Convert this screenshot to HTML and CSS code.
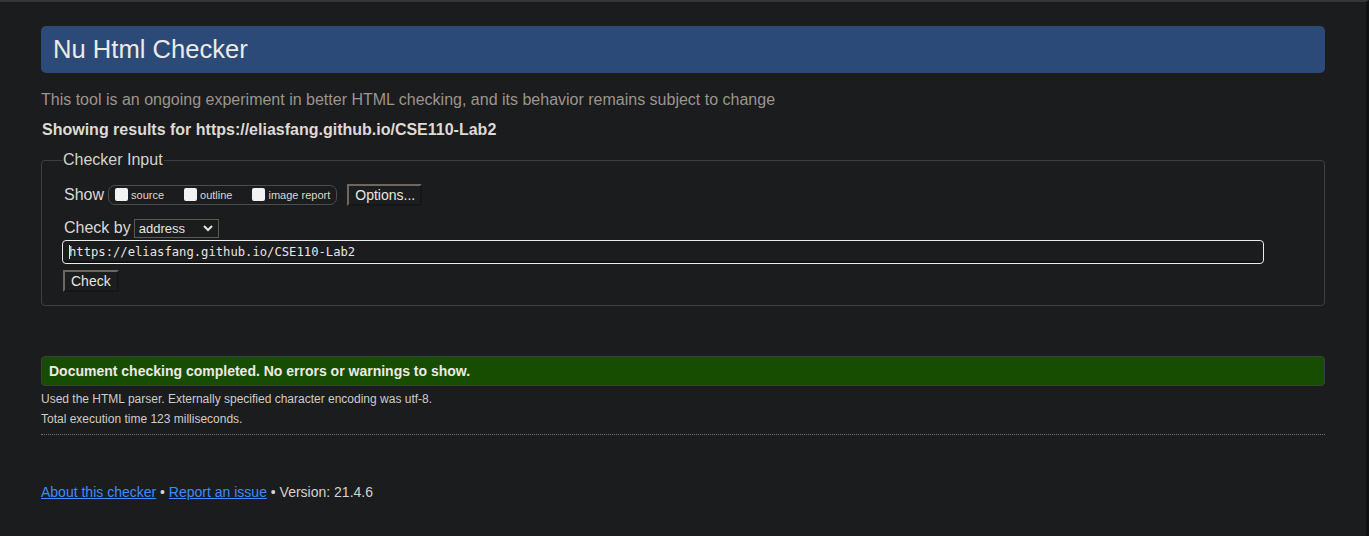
FILE: index.html
```html
<!DOCTYPE html>
<html lang="en">
<head>
<meta charset="utf-8">
<title>Nu Html Checker</title>
<link rel="stylesheet" href="styles.css">
</head>
<body>
<div class="page">
  <h1 class="title">Nu Html Checker</h1>
  <p class="intro">This tool is an ongoing experiment in better HTML checking, and its behavior remains subject to change</p>
  <p class="showing">Showing results for https://eliasfang.github.io/CSE110-Lab2</p>
  <fieldset class="input-box">
    <legend>Checker Input</legend>
    <div class="row show-row">
      <span class="lbl">Show</span>
      <span class="opts">
        <label><span class="cb"></span>source</label>
        <label><span class="cb"></span>outline</label>
        <label><span class="cb"></span>image report</label>
      </span>
      <span class="btn options">Options...</span>
    </div>
    <div class="row by-row">
      <span class="lbl">Check by</span>
      <span class="select">address
        <svg width="12" height="8" viewBox="0 0 12 8"><path d="M2 2l4 4 4-4" fill="none" stroke="#e8e6e3" stroke-width="2"/></svg>
      </span>
    </div>
    <div class="url"><span class="caret"></span>https://eliasfang.github.io/CSE110-Lab2</div>
    <div class="row"><span class="btn check">Check</span></div>
  </fieldset>
  <div class="success">Document checking completed. No errors or warnings to show.</div>
  <p class="detail">Used the HTML parser. Externally specified character encoding was utf-8.</p>
  <p class="detail">Total execution time 123 milliseconds.</p>
  <hr class="dots">
  <p class="footer"><a href="#">About this checker</a> • <a href="#">Report an issue</a> • Version: 21.4.6</p>
</div>
</body>
</html>
```
FILE: styles.css
```css
html, body {
  margin: 0;
  padding: 0;
  background: #1b1c1e;
}
body {
  font-family: "Liberation Sans", Arial, sans-serif;
  color: #dcd8d2;
  height: 536px;
  box-sizing: border-box;
  border-top: 2px solid #34363a;
  border-right: 3px solid #0f1011;
  overflow: hidden;
}
.page {
  padding: 24px 41px 0 41px;
}
.title {
  margin: 0;
  height: 47px;
  box-sizing: border-box;
  background: #2b4a78;
  border-radius: 5px;
  font-weight: normal;
  font-size: 25.6px;
  line-height: 47px;
  padding-left: 12px;
  color: #eceae6;
}
.intro {
  margin: 18px 0 0 0;
  font-size: 16px;
  line-height: 18px;
  color: #9b958d;
}
.showing {
  margin: 12px 0 0 1px;
  font-size: 16px;
  line-height: 18px;
  font-weight: bold;
  color: #dedad4;
}
.input-box {
  margin: 12px 0 0 0;
  border: 1px solid #3b3e42;
  border-radius: 4px;
  padding: 15px 20px 13px 20px;
  min-width: 0;
}
.input-box legend {
  font-size: 16px;
  color: #d6d2cc;
  padding: 0 1px;
  margin-left: 0;
}
.row {
  display: flex;
  align-items: center;
}
.lbl {
  font-size: 16px;
  color: #dcd8d2;
  padding-left: 2px;
}
.show-row {
  height: 22px;
}
.opts {
  display: flex;
  align-items: center;
  margin-left: 4px;
  height: 20px;
  box-sizing: border-box;
  border: 1px solid #4a4d51;
  border-radius: 7px;
  padding: 0 6px 0 6px;
  font-size: 11px;
  color: #dcd8d2;
}
.opts label {
  display: flex;
  align-items: center;
  margin-right: 20px;
}
.opts label:last-child { margin-right: 0; }
.cb {
  width: 13px;
  height: 13px;
  background: #f2f2f2;
  border-radius: 2px;
  margin-right: 3px;
  position: relative;
  top: -1px;
}
.btn {
  display: inline-block;
  box-sizing: border-box;
  font-size: 14px;
  color: #e8e6e3;
  background: #1c1d1f;
  border-top: 2px solid #6e6760;
  border-left: 2px solid #6e6760;
  border-right: 2px solid #151617;
  border-bottom: 2px solid #151617;
}
.options {
  margin-left: 10px;
  height: 22px;
  line-height: 19px;
  padding: 0 5px 0 6px;
}
.by-row {
  margin-top: 12px;
  height: 20px;
}
.select {
  display: inline-flex;
  align-items: center;
  justify-content: space-between;
  margin-left: 3px;
  width: 85px;
  height: 19px;
  box-sizing: border-box;
  border: 1px solid #5d5851;
  padding: 0 4px 0 4px;
  font-size: 13px;
  color: #e8e6e3;
  background: #1b1c1e;
}
.url {
  margin-top: 2px;
  height: 24px;
  box-sizing: border-box;
  border: 1px solid #ecebea;
  border-radius: 4px;
  width: 1202px;
  font-family: "DejaVu Sans Mono", "Liberation Mono", monospace;
  font-size: 12.2px;
  line-height: 22px;
  padding-left: 6px;
  color: #e8e6e3;
  background: #1b1c1e;
  box-shadow: inset 0 -2px 0 #0f1011;
  display: flex;
  align-items: center;
}
.caret {
  display: inline-block;
  width: 1px;
  height: 14px;
  background: #e8e6e3;
  margin-right: -1px;
}
.check {
  margin-top: 6px;
  margin-left: 1px;
  height: 22px;
  line-height: 19px;
  padding: 0 6px 0 6px;
}
.success {
  margin-top: 50px;
  height: 30px;
  box-sizing: border-box;
  background: #174d00;
  border: 1px solid #3b3f43;
  border-radius: 4px;
  font-size: 14px;
  font-weight: bold;
  line-height: 28px;
  padding-left: 7px;
  color: #eceae6;
}
.detail {
  margin: 6px 0 0 0;
  font-size: 12px;
  line-height: 15px;
  color: #d0ccc6;
}
.detail + .detail {
  margin-top: 5px;
}
.dots {
  margin: 7px 0 0 0;
  border: 0;
  border-top: 1px dotted #77716a;
  height: 0;
}
.footer {
  margin: 49px 0 0 0;
  font-size: 14px;
  line-height: 16px;
  color: #d6d2cc;
}
.footer a {
  color: #3d8cff;
  text-decoration: underline;
}
```
